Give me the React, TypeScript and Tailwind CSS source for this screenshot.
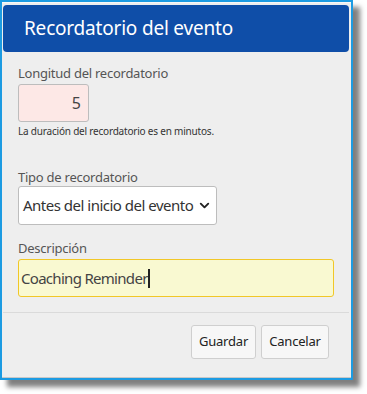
import { ChevronDown } from "lucide-react";

const font = { fontFamily: '"Noto Sans", "Open Sans", sans-serif' };

export default function App() {
  return (
    <div className="min-h-screen bg-white" style={font}>
      <div className="w-[353px] h-[380px] border-2 border-[#1c9be2] shadow-[7px_7px_5px_rgba(0,0,0,0.5)]">
        <div className="flex h-full flex-col bg-[#eeeeee] border-b border-[#c8c8c8] border-t border-t-[#f8f8f8]">
          {/* Header */}
          <div className="ml-[1px] mr-[2px] mt-[2px] flex h-[47px] items-center rounded-[4px] bg-[#0f4ea8] px-[21px] text-[19px] tracking-[-0.2px] text-white">
            Recordatorio del evento
          </div>

          {/* Body */}
          <div className="flex flex-col px-[16px] pt-[12px]">
            <label className="text-[13px] leading-[18px] tracking-[-0.25px] text-[#555]">
              Longitud del recordatorio
            </label>
            <div className="mt-[2px] flex h-[38px] w-[71px] items-center justify-end rounded-[3px] border border-[#bdbdbd] bg-[#fde8e6] px-[7px] text-[16px] text-[#444]">
              5
            </div>
            <p className="mt-[2px] whitespace-nowrap text-[10px] leading-[14px] tracking-[-0.2px] text-[#333]">
              La duración del recordatorio es en minutos.
            </p>

            <label className="mt-[30px] text-[13px] leading-[18px] tracking-[-0.25px] text-[#555]">
              Tipo de recordatorio
            </label>
            <div className="flex h-[39px] w-[199px] items-center gap-[4px] rounded-[3px] border border-[#bdbdbd] bg-white pl-[4px] text-[15px] tracking-[-0.5px] text-[#333]">
              <span className="whitespace-nowrap">Antes del inicio del evento</span>
              <ChevronDown size={15} strokeWidth={3} className="shrink-0 text-[#222]" />
            </div>

            <label className="mt-[14px] text-[13px] leading-[18px] tracking-[-0.25px] text-[#555]">
              Descripción
            </label>
            <div className="mt-[2px] flex h-[38px] w-[316px] items-center rounded-[3px] border border-[#f1c727] bg-[#f9f9d1] px-[2px] text-[15px] tracking-[-0.7px] text-[#444]">
              <span className="whitespace-nowrap">Coaching Reminder</span>
              <span className="h-[19px] w-[2px] bg-[#222]" />
            </div>
          </div>

          {/* Footer */}
          <div className="mt-[15px] ml-[1px] mr-[2px] flex justify-end gap-[5px] border-t border-[#dadada] px-[20px] pt-[12px]">
            <button className="h-[34px] w-[65px] rounded-[3px] border border-[#cfcfcf] bg-[#f7f7f7] text-[13px] tracking-[-0.2px] text-[#222]">
              Guardar
            </button>
            <button className="h-[34px] w-[68px] rounded-[3px] border border-[#cfcfcf] bg-[#f7f7f7] text-[13px] tracking-[-0.2px] text-[#222]">
              Cancelar
            </button>
          </div>
        </div>
      </div>
    </div>
  );
}
